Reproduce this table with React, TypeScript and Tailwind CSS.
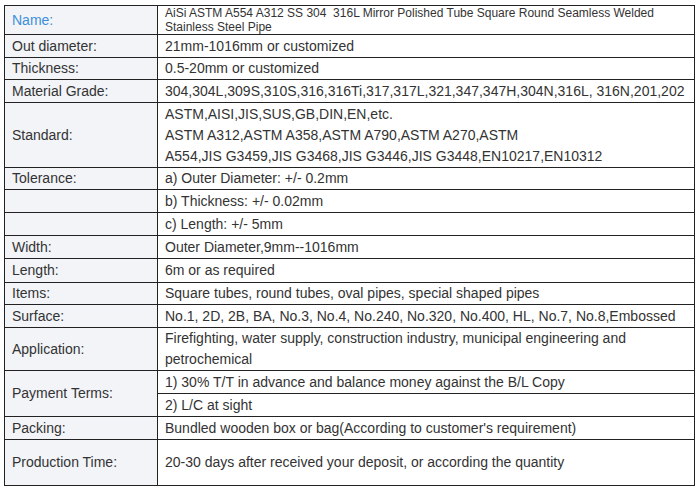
import React from "react";

const L = "w-[153px] shrink-0 bg-[#f2f4f8] border-r border-[#222] pl-[7px] flex items-center";
const R = "flex-1 bg-white pl-[7px] flex items-center";

function Row({ label, h, children, first }: { label: React.ReactNode; h: string; children: React.ReactNode; first?: boolean }) {
  return (
    <div className={`flex ${first ? "" : "border-t border-[#222]"} ${h}`}>
      <div className={L}>{label}</div>
      <div className={R}>{children}</div>
    </div>
  );
}

export default function App() {
  return (
    <div
      className="w-[697px] h-[489px] bg-white pt-[5px] pl-[4px] text-[14px] text-[#333]"
      style={{ fontFamily: '"Liberation Sans", Arial, sans-serif' }}
    >
      <div className="w-[691px] border border-[#222] flex flex-col">
        <div className="flex h-[28px]">
          <div className={L}>
            <span className="text-[#3d8fdc]">Name:</span>
          </div>
          <div className={`${R} text-[12px] leading-[14px]`}>
            <span>
              AiSi ASTM A554 A312 SS 304&nbsp; 316L Mirror Polished Tube Square Round Seamless Welded
              <br />
              Stainless Steel Pipe
            </span>
          </div>
        </div>
        <Row label="Out diameter:" h="h-[23px]">21mm-1016mm or customized</Row>
        <Row label="Thickness:" h="h-[22px]">0.5-20mm or customized</Row>
        <Row label="Material Grade:" h="h-[23px]">
          304,304L,309S,310S,316,316Ti,317,317L,321,347,347H,304N,316L, 316N,201,202
        </Row>
        <Row label="Standard:" h="h-[65px]">
          <span className="leading-[21px]">
            ASTM,AISI,JIS,SUS,GB,DIN,EN,etc.
            <br />
            ASTM A312,ASTM A358,ASTM A790,ASTM A270,ASTM
            <br />
            A554,JIS G3459,JIS G3468,JIS G3446,JIS G3448,EN10217,EN10312
          </span>
        </Row>
        <Row label="Tolerance:" h="h-[22px]">a) Outer Diameter: +/- 0.2mm</Row>
        <Row label="" h="h-[23px]">b) Thickness: +/- 0.02mm</Row>
        <Row label="" h="h-[23px]">c) Length: +/- 5mm</Row>
        <Row label="Width:" h="h-[23px]">Outer Diameter,9mm--1016mm</Row>
        <Row label="Length:" h="h-[24px]">6m or as required</Row>
        <Row label="Items:" h="h-[22px]">Square tubes, round tubes, oval pipes, special shaped pipes</Row>
        <Row label="Surface:" h="h-[23px]">
          No.1, 2D, 2B, BA, No.3, No.4, No.240, No.320, No.400, HL, No.7, No.8,Embossed
        </Row>
        <Row label="Application:" h="h-[43px]">
          <span className="leading-[21px]">
            Firefighting, water supply, construction industry, municipal engineering and
            <br />
            petrochemical
          </span>
        </Row>
        <div className="flex border-t border-[#222] h-[46px]">
          <div className={L}>Payment Terms:</div>
          <div className="flex-1 flex flex-col">
            <div className="h-[22px] pl-[7px] flex items-center">1) 30% T/T in advance and balance money against the B/L Copy</div>
            <div className="h-[23px] pl-[7px] flex items-center border-t border-[#222]">2) L/C at sight</div>
          </div>
        </div>
        <Row label="Packing:" h="h-[23px]">Bundled wooden box or bag(According to customer's requirement)</Row>
        <Row label="Production Time:" h="h-[46px]">20-30 days after received your deposit, or according the quantity</Row>
      </div>
    </div>
  );
}
